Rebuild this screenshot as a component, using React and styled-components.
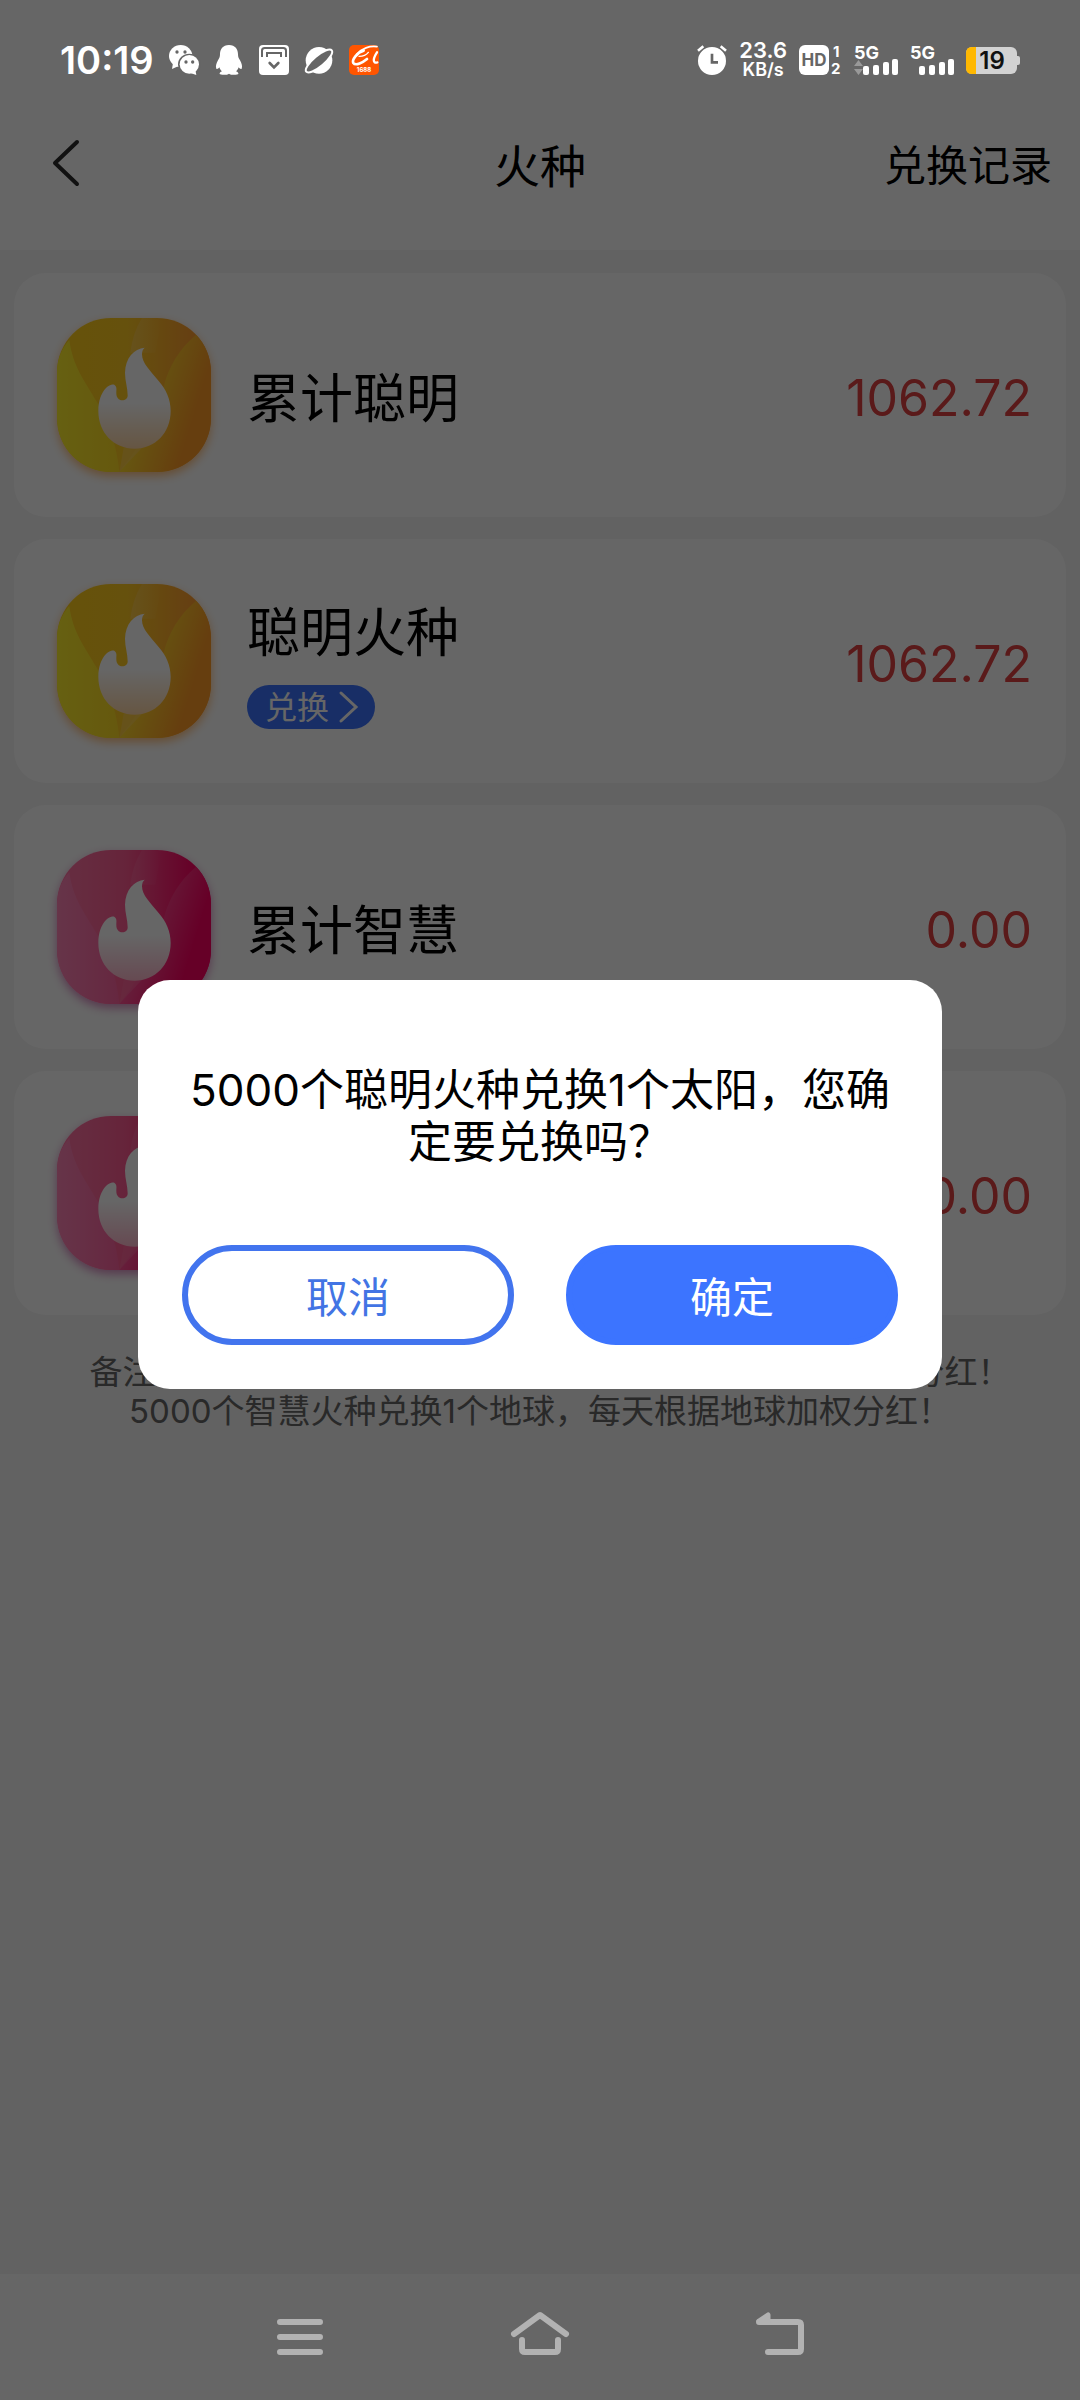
import { useState } from "react";
import styled, { createGlobalStyle } from "styled-components";

const GlobalStyle = createGlobalStyle`
  :root {
    --bar: #666666;
    --blue: #3c74ff;
    --red: #e14141;
  }
  * {
    box-sizing: border-box;
  }
  body {
    margin: 0;
    background: #f5f5f5;
    color: #000;
    font-family: Inter, "Noto Sans CJK SC", sans-serif;
  }
  button {
    font-family: inherit;
    border: none;
    padding: 0;
    background: none;
    color: inherit;
    cursor: pointer;
  }
  svg {
    display: block;
    flex-shrink: 0;
    overflow: visible;
  }
`;

const Page = styled.div`
  min-height: 100vh;
  display: flex;
  flex-direction: column;
`;

const StatusBar = styled.div`
  position: relative;
  z-index: 2;
  height: 95px;
  padding: 25px 60px 0;
  display: flex;
  align-items: center;
  justify-content: space-between;
  color: #fff;
  background: var(--bar);
`;

const StatusGroup = styled.div`
  display: flex;
  align-items: center;
  gap: ${(props) => props.$gap}px;
`;

const Clock = styled.span`
  font-size: 38px;
  font-weight: 600;
  line-height: 40px;
`;

const Speed = styled.span`
  display: flex;
  flex-direction: column;
  align-items: center;
  font-size: 22px;
  font-weight: 600;
  line-height: 20px;
  small {
    font-size: 18px;
  }
`;

const Header = styled.header`
  height: 155px;
  padding: 0 28px 20px;
  display: grid;
  grid-template-columns: 1fr auto 1fr;
  align-items: center;
  background: #fff;
`;

const BackButton = styled.button`
  justify-self: start;
  padding: 0 24px;
`;

const Title = styled.h1`
  margin: 0;
  font-size: 46px;
  font-weight: 400;
`;

const RecordLink = styled.a`
  justify-self: end;
  font-size: 42px;
  color: inherit;
  text-decoration: none;
`;

const Content = styled.main`
  flex: 1;
  padding: 23px 14px;
`;

const CardList = styled.div`
  display: flex;
  flex-direction: column;
  gap: 22px;
`;

const Card = styled.section`
  height: 244px;
  padding: 0 34px 0 43px;
  display: flex;
  align-items: center;
  gap: 36px;
  border-radius: 32px;
  background: #fff;
`;

const Badge = styled.svg`
  width: 154px;
  height: 154px;
  border-radius: 54px;
  box-shadow: 0 4px 10px ${(props) => props.$shadow};
`;

const CardBody = styled.div`
  flex: 1;
  display: flex;
  flex-direction: column;
  align-items: flex-start;
  gap: 20px;
`;

const CardName = styled.h2`
  margin: 0;
  padding-top: 8px;
  font-size: 53px;
  font-weight: 400;
  line-height: 64px;
`;

const ExchangeButton = styled.button`
  width: 128px;
  height: 44px;
  padding: 2px 16px 0 18px;
  display: flex;
  align-items: center;
  justify-content: space-between;
  border-radius: 22px;
  background: var(--blue);
  color: #fff;
  font-size: 32px;
  line-height: 42px;
`;

const Amount = styled.span`
  padding-top: 6px;
  font-size: 50px;
  color: var(--red);
`;

const Note = styled.p`
  margin: 38px 0 0;
  text-align: center;
  text-indent: 20px;
  font-size: 33px;
  line-height: 39px;
  color: #666;
`;

const Overlay = styled.div`
  position: fixed;
  inset: 0;
  z-index: 1;
  padding: 95px 138px 126px;
  display: flex;
  align-items: center;
  justify-content: center;
  background: rgba(0, 0, 0, 0.6);
`;

const Dialog = styled.div`
  width: 100%;
  max-width: 804px;
  padding: 84px 44px 44px;
  border-radius: 32px;
  background: #fff;
`;

const DialogText = styled.p`
  margin: 0 0 77px;
  text-align: center;
  font-size: 44px;
  line-height: 52px;
`;

const DialogActions = styled.div`
  display: flex;
  gap: 52px;
`;

const DialogButton = styled.button`
  flex: 1;
  height: 100px;
  padding-bottom: 2px;
  border-radius: 50px;
  border: 6px solid ${(props) => (props.$primary ? "#3c74ff" : "#4274ee")};
  background: ${(props) => (props.$primary ? "#3c74ff" : "#fff")};
  color: ${(props) => (props.$primary ? "#fff" : "#4274e4")};
  font-size: 42px;
`;

const NavBar = styled.nav`
  position: relative;
  z-index: 2;
  height: 126px;
  display: flex;
  align-items: center;
  justify-content: center;
  gap: 180px;
  background: var(--bar);
  color: #b2b2b2;
`;

const palettes = {
  gold: {
    base: ["#ffcc1c", "#ffcb22", "#ff9c30"],
    left: ["#fff02c", "#ffdc24"],
    right: ["#ffe22c", "#ff9c26"],
    glow: "#ffd06a",
    foot: "#ffd6a6",
    shadow: "rgba(255, 150, 40, 0.6)",
  },
  pink: {
    base: ["#ff6ea0", "#ff5a92", "#ff0062"],
    left: ["#ff84b6", "#ff62a0"],
    right: ["#ff5c9c", "#ff0062"],
    glow: "#ff6ea4",
    foot: "#ffb8cc",
    shadow: "rgba(190, 60, 150, 0.6)",
  },
};

const FlameBadge = ({ id, kind }) => {
  const p = palettes[kind];
  return (
    <Badge viewBox="35 26 462 462" $shadow={p.shadow} aria-hidden="true">
      <defs>
        <linearGradient id={`${id}-base`}>
          <stop offset="0.15" stopColor={p.base[0]} />
          <stop offset="0.45" stopColor={p.base[1]} />
          <stop offset="0.9" stopColor={p.base[2]} />
        </linearGradient>
        <linearGradient id={`${id}-left`}>
          <stop offset="0" stopColor={p.left[0]} />
          <stop offset="1" stopColor={p.left[1]} />
        </linearGradient>
        <linearGradient id={`${id}-right`} x1="0.2" y1="0.2" x2="0.85" y2="0.5">
          <stop offset="0.1" stopColor={p.right[0]} />
          <stop offset="1" stopColor={p.right[1]} />
        </linearGradient>
        <linearGradient id={`${id}-glow`}>
          <stop offset="0" stopColor={p.glow} />
          <stop offset="1" stopColor={p.glow} stopOpacity="0" />
        </linearGradient>
        <linearGradient id={`${id}-flame`} x1="0" y1="0" x2="0" y2="1">
          <stop offset="0.55" stopColor="#fff" />
          <stop offset="1" stopColor={p.foot} />
        </linearGradient>
      </defs>
      <rect x="35" y="26" width="462" height="462" rx="162" fill={`url(#${id}-base)`} />
      <path d="M290 26 Q262 70 255 130 L330 130 L350 26Z" fill={`url(#${id}-glow)`} opacity="0.5" />
      <path
        d="M72 92 C82 170 118 215 155 278 C190 335 215 410 222 488 L197 488 C107 488 35 416 35 326 L35 188 C35 150 50 115 72 92Z"
        fill={`url(#${id}-left)`}
      />
      <path
        d="M452 76 C400 120 370 175 357 225 C340 310 300 390 222 488 L335 488 C425 488 497 416 497 326 L497 188 C497 144 480 104 452 76Z"
        fill={`url(#${id}-right)`}
      />
      <path d="M235 415 L222 488 L300 405Z" fill={p.glow} opacity="0.45" />
      <path
        d="M298 115 C266 118 240 145 239 190 C239 215 247 235 247 258 C247 268 240 273 231 273 C220 273 213 265 213 252 C213 240 215 236 210 229 C205 222 192 226 182 236 C167 252 159 275 159 305 C159 370 205 418 268 418 C330 418 376 370 376 305 C376 270 362 240 340 215 C315 184 290 162 290 135 C290 125 293 119 298 115Z"
        fill={`url(#${id}-flame)`}
      />
    </Badge>
  );
};

const WechatIcon = () => (
  <svg width="30" height="30" viewBox="0 0 90 90">
    <g fill="#fff">
      <ellipse cx="35" cy="33" rx="35" ry="33" />
      <path d="M12 54l-3 18 20-9z" />
    </g>
    <ellipse cx="61" cy="58" rx="34" ry="32" fill="#666" />
    <g fill="#fff">
      <ellipse cx="61" cy="58" rx="29" ry="28" />
      <path d="M64 84l18 6-3-15z" />
    </g>
    <g fill="#666">
      <circle cx="24" cy="21" r="5" />
      <circle cx="48" cy="21" r="5" />
      <circle cx="51" cy="51" r="5" />
      <circle cx="71" cy="51" r="5" />
    </g>
  </svg>
);

const PenguinIcon = () => (
  <svg width="30" height="30" viewBox="0 0 90 90" fill="#fff">
    <path d="M45 0C26 0 18 13 18 28C18 36 16 40 12 46C7 54 4 65 7 71C9 74 13 71 16 67C18 72 20 76 24 79C19 81 16 84 17 87C18 90 40 91 45 86C50 91 72 90 73 87C74 84 71 81 66 79C70 76 72 72 74 67C77 71 81 74 83 71C86 65 83 54 78 46C74 40 72 36 72 28C72 13 64 0 45 0Z" />
  </svg>
);

const InboxIcon = () => (
  <svg width="30" height="30" viewBox="0 0 90 90">
    <rect width="90" height="90" rx="12" fill="#fff" />
    <g fill="none" stroke="#666" strokeWidth="6">
      <path d="M9 36V17q0-8 8-8h56q8 0 8 8v19" />
      <path d="M24 36V24h42v12" />
      <path d="M32 54l13 13 13-13" strokeWidth="8" strokeLinecap="round" />
    </g>
  </svg>
);

const PlanetIcon = () => (
  <svg width="30" height="30" viewBox="0 0 90 90">
    <circle cx="45" cy="46" r="40" fill="#fff" />
    <ellipse cx="45" cy="48" rx="50" ry="16" transform="rotate(-40 45 48)" fill="#666" stroke="#fff" strokeWidth="6" />
  </svg>
);

const ShopIcon = () => (
  <svg width="30" height="30" viewBox="0 0 90 90">
    <rect width="90" height="90" rx="15" fill="#ff5500" />
    <g fill="none" stroke="#fff" strokeLinecap="round">
      <path d="M24 28C38 10 62 2 84 5" strokeWidth="5" />
      <path d="M44 17C24 22 8 45 13 54C20 64 42 52 54 42" strokeWidth="8" />
      <path d="M30 34C42 34 52 30 58 22" strokeWidth="4" />
      <path d="M84 22C72 40 70 56 85 52" strokeWidth="7" />
    </g>
    <text x="45" y="82" textAnchor="middle" fontSize="18" fontWeight="700" fill="#fff">
      1688
    </text>
  </svg>
);

const AlarmIcon = () => (
  <svg width="30" height="30" viewBox="0 0 90 90">
    <circle cx="45" cy="48" r="42" fill="#fff" />
    <path d="M2 19L19 4M71 4l17 15" stroke="#666" strokeWidth="14" />
    <path d="M3 17L19 4M71 4l16 13" stroke="#fff" strokeWidth="8" />
    <path d="M45 26v26h18" fill="none" stroke="#666" strokeWidth="8" />
  </svg>
);

const HdIcon = () => (
  <svg width="43" height="30" viewBox="0 0 43 30" fill="#fff" fontWeight="700">
    <rect width="30" height="30" rx="6" />
    <text x="15" y="21" textAnchor="middle" fontSize="17" fill="#666">
      HD
    </text>
    <text x="34" y="12" fontSize="15">
      1
    </text>
    <text x="32" y="29" fontSize="15">
      2
    </text>
  </svg>
);

const SignalIcon = ({ arrows }) => (
  <svg width="44" height="30" viewBox="0 0 44 30" fill="#fff">
    <text x="0" y="14" fontSize="18" fontWeight="700">
      5G
    </text>
    {arrows && <path d="M0 21l4.500-6 4.500 6zM0 24h9l-4.500 6z" fill="#999" />}
    <rect x="9" y="21" width="6" height="9" rx="2" />
    <rect x="19" y="20" width="6" height="10" rx="2" />
    <rect x="29" y="17" width="6" height="13" rx="2" />
    <rect x="38" y="14" width="6" height="16" rx="2" />
  </svg>
);

const BatteryIcon = () => (
  <svg width="54" height="27" viewBox="0 0 54 27">
    <path d="M50 9h2q2 0 2 2v5q0 2-2 2h-2z" fill="#d2d2d2" />
    <rect width="51" height="27" rx="6" fill="#d2d2d2" />
    <path d="M10 0H6Q0 0 0 6v15q0 6 6 6h4z" fill="#ffb800" />
    <text x="26" y="22" textAnchor="middle" fontSize="24" fontWeight="600" fill="#111">
      19
    </text>
  </svg>
);

const cards = [
  { id: "c1", name: "累计聪明", amount: "1062.72", kind: "gold" },
  { id: "c2", name: "聪明火种", amount: "1062.72", kind: "gold", exchange: true },
  { id: "c3", name: "累计智慧", amount: "0.00", kind: "pink" },
  { id: "c4", name: "智慧火种", amount: "0.00", kind: "pink", exchange: true },
];

const App = () => {
  const [open, setOpen] = useState(true);
  const close = () => setOpen(false);

  return (
    <Page lang="zh-CN">
      <GlobalStyle />
      <StatusBar>
        <StatusGroup $gap={15}>
          <Clock>10:19</Clock>
          <WechatIcon />
          <PenguinIcon />
          <InboxIcon />
          <PlanetIcon />
          <ShopIcon />
        </StatusGroup>
        <StatusGroup $gap={12}>
          <AlarmIcon />
          <Speed>
            23.6
            <small>KB/s</small>
          </Speed>
          <HdIcon />
          <SignalIcon arrows />
          <SignalIcon />
          <BatteryIcon />
        </StatusGroup>
      </StatusBar>

      <Header>
        <BackButton aria-label="返回">
          <svg width="28" height="48" viewBox="0 0 28 48" fill="none" stroke="#2b2b2b" strokeWidth="4" strokeLinecap="round" strokeLinejoin="round">
            <path d="M25 3L3 24l22 21" />
          </svg>
        </BackButton>
        <Title>火种</Title>
        <RecordLink href="#records">兑换记录</RecordLink>
      </Header>

      <Content>
        <CardList>
          {cards.map((card) => (
            <Card key={card.id}>
              <FlameBadge id={card.id} kind={card.kind} />
              <CardBody>
                <CardName>{card.name}</CardName>
                {card.exchange && (
                  <ExchangeButton onClick={() => setOpen(true)}>
                    兑换
                    <svg width="20" height="32" viewBox="0 0 20 32" fill="none" stroke="#fff" strokeWidth="3" strokeLinecap="round">
                      <path d="M2 1l15 14L2 29" />
                    </svg>
                  </ExchangeButton>
                )}
              </CardBody>
              <Amount>{card.amount}</Amount>
            </Card>
          ))}
        </CardList>
        <Note>
          备注：5000个聪明火种兑换1个太阳，每天根据太阳加权分红！
          <br />
          5000个智慧火种兑换1个地球，每天根据地球加权分红！
        </Note>
      </Content>

      <NavBar>
        <button aria-label="菜单">
          <svg width="60" height="60" viewBox="0 -3 60 60" stroke="currentColor" strokeWidth="6" strokeLinecap="round">
            <path d="M10 12h40M10 27h40M10 42h40" />
          </svg>
        </button>
        <button aria-label="主页">
          <svg width="60" height="60" viewBox="0 -3 60 60" fill="none" stroke="currentColor" strokeWidth="6" strokeLinecap="round" strokeLinejoin="round">
            <path d="M4 24L30 5l26 19" />
            <path d="M12 30v9q0 3 3 3h30q3 0 3-3v-9" />
          </svg>
        </button>
        <button aria-label="后退">
          <svg width="60" height="60" viewBox="0 -3 60 60" fill="none" stroke="currentColor" strokeWidth="6" strokeLinecap="round" strokeLinejoin="round">
            <path d="M9 12h39q3 0 3 3v24q0 3-3 3H18" />
            <path d="M9 11l9-6v6z" strokeWidth="5" fill="currentColor" />
          </svg>
        </button>
      </NavBar>

      {open && (
        <Overlay>
          <Dialog role="dialog" aria-modal="true" aria-labelledby="dialog-text">
            <DialogText id="dialog-text">5000个聪明火种兑换1个太阳，您确定要兑换吗？</DialogText>
            <DialogActions>
              <DialogButton onClick={close}>取消</DialogButton>
              <DialogButton $primary onClick={close}>
                确定
              </DialogButton>
            </DialogActions>
          </Dialog>
        </Overlay>
      )}
    </Page>
  );
};

export default App;
